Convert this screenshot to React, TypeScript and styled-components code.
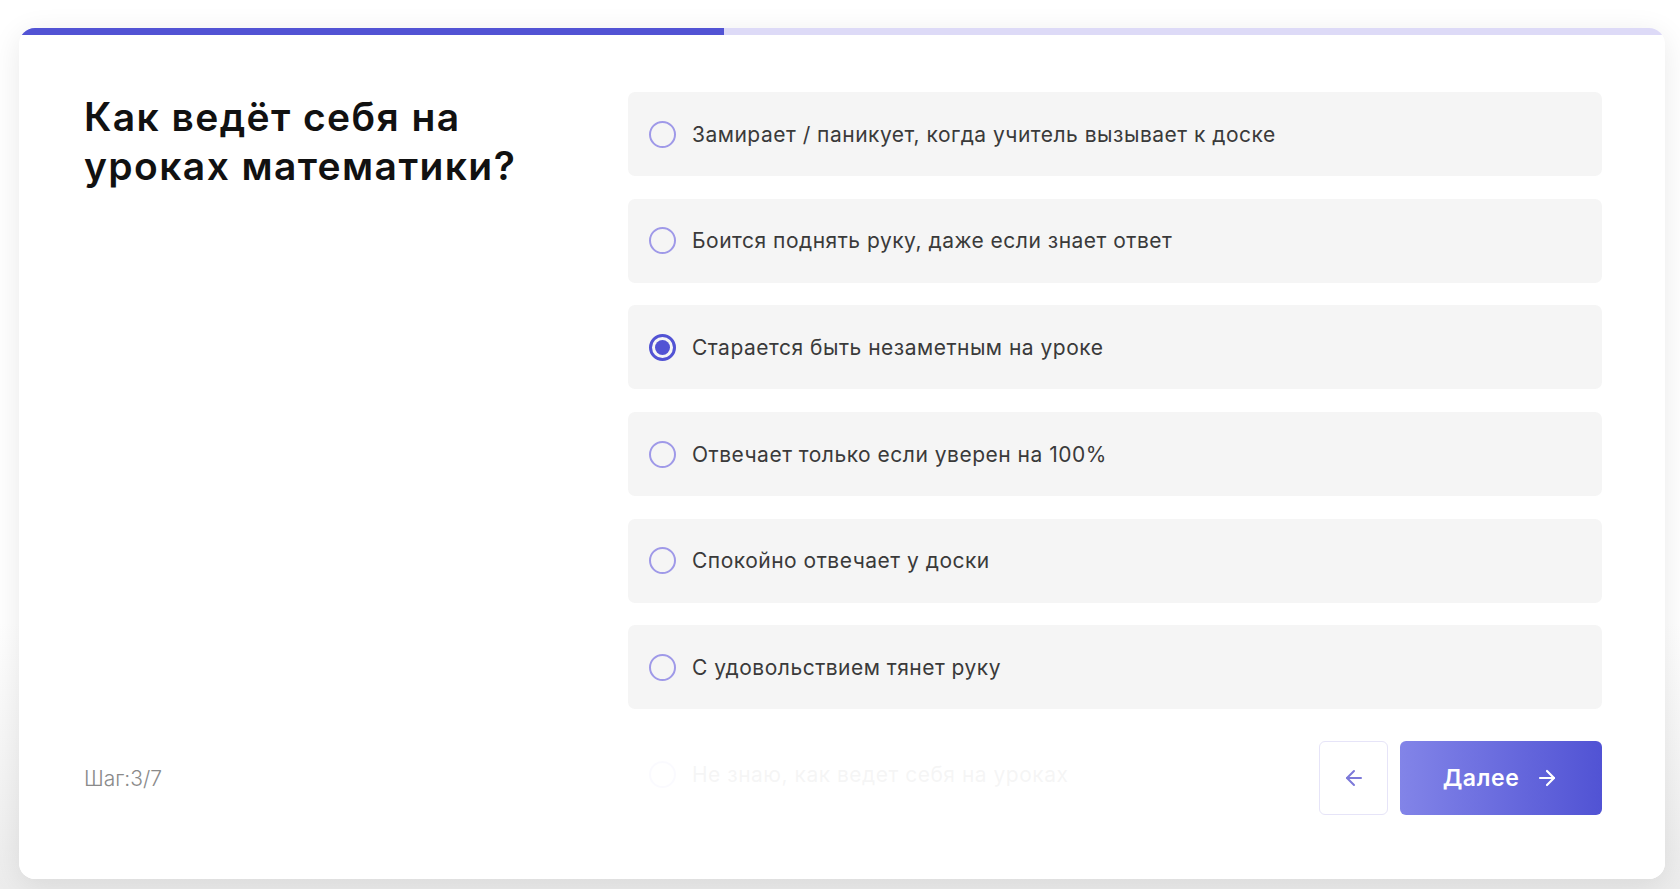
import React, { useState } from 'react';
import styled, { createGlobalStyle, css } from 'styled-components';
import { ArrowLeft, ArrowRight } from 'lucide-react';

const GlobalStyle = createGlobalStyle`
  html, body {
    margin: 0;
    padding: 0;
    height: 100%;
  }
  body {
    background: #ffffff;
    font-family: Inter, "Noto Sans", "Liberation Sans", sans-serif;
    color: #333;
  }
  #root {
    height: 100%;
  }
`;

const Page = styled.div`
  height: 889px;
  box-sizing: border-box;
  padding: 28px 15px 10px 19px;
  background: linear-gradient(180deg, #ffffff 0%, #ffffff 70%, #ececec 100%);
`;

const Card = styled.div`
  position: relative;
  height: 851px;
  background: #fff;
  border-radius: 16px;
  overflow: hidden;
  box-shadow: 0 6px 30px rgba(0, 0, 0, 0.09);
`;

const Track = styled.div`
  height: 7px;
  background: #dddaf7;
`;

const Fill = styled.div`
  height: 100%;
  background: #5253d4;
`;

const Body = styled.div`
  display: grid;
  grid-template-columns: 1fr 974px;
  padding: 57px 63px 0 65px;
`;

const Title = styled.h1`
  margin: 0;
  max-width: 480px;
  font-size: 39px;
  line-height: 49px;
  font-weight: 600;
  color: #111;
  letter-spacing: 1.4px;
`;

const Options = styled.div`
  display: flex;
  flex-direction: column;
  gap: 22.7px;
`;

const Option = styled.label`
  display: flex;
  align-items: center;
  gap: 16px;
  height: 84px;
  padding: 0 21px;
  box-sizing: border-box;
  background: #f5f5f5;
  border-radius: 7px;
  cursor: pointer;
  font-size: 21px;
  color: #3a3a3a;
  letter-spacing: 0.5px;
`;

const Radio = styled.span<{ $checked: boolean }>`
  flex: none;
  width: 27px;
  height: 27px;
  box-sizing: border-box;
  border-radius: 50%;
  border: 2.5px solid #9f99e8;
  display: flex;
  align-items: center;
  justify-content: center;
  ${(p) =>
    p.$checked &&
    css`
      border: 3px solid #5253d4;
      &::after {
        content: '';
        width: 15px;
        height: 15px;
        border-radius: 50%;
        background: #5253d4;
      }
    `}
`;

const Footer = styled.div`
  position: absolute;
  left: 0;
  right: 0;
  bottom: 0;
  height: 151px;
  box-sizing: border-box;
  padding: 13px 63px 0 65px;
  display: flex;
  align-items: flex-start;
  justify-content: space-between;
  background: rgba(255, 255, 255, 0.95);
`;

const Step = styled.div`
  height: 74px;
  display: flex;
  align-items: center;
  font-size: 21px;
  font-weight: 300;
  color: #8a8a8a;
`;

const Buttons = styled.div`
  display: flex;
  gap: 12px;
`;

const BackButton = styled.button`
  width: 69px;
  height: 74px;
  display: flex;
  align-items: center;
  justify-content: center;
  background: #fff;
  border: 1px solid #e6e4f8;
  border-radius: 6px;
  color: #7c79d9;
  cursor: pointer;
`;

const NextButton = styled.button`
  width: 202px;
  height: 74px;
  display: flex;
  align-items: center;
  justify-content: center;
  gap: 16px;
  border: none;
  border-radius: 6px;
  background: linear-gradient(90deg, #8284e8 0%, #5153d4 100%);
  color: #fff;
  font-family: Inter, "Noto Sans", sans-serif;
  font-size: 23px;
  font-weight: 600;
  letter-spacing: 0.6px;
  cursor: pointer;
`;

const answers = [
  'Замирает / паникует, когда учитель вызывает к доске',
  'Боится поднять руку, даже если знает ответ',
  'Старается быть незаметным на уроке',
  'Отвечает только если уверен на 100%',
  'Спокойно отвечает у доски',
  'С удовольствием тянет руку',
  'Не знаю, как ведет себя на уроках',
];

export default function App() {
  const [selected, setSelected] = useState(2);
  const step = 3;
  const total = 7;

  return (
    <>
      <GlobalStyle />
      <Page>
        <Card>
          <Track>
            <Fill style={{ width: `${(step / total) * 100}%` }} />
          </Track>
          <Body>
            <Title>Как ведёт себя на уроках математики?</Title>
            <Options>
              {answers.map((a, i) => (
                <Option key={i} onClick={() => setSelected(i)}>
                  <Radio $checked={selected === i} />
                  {a}
                </Option>
              ))}
            </Options>
          </Body>
          <Footer>
            <Step>
              Шаг:{step}/{total}
            </Step>
            <Buttons>
              <BackButton aria-label="Назад">
                <ArrowLeft size={24} strokeWidth={2} />
              </BackButton>
              <NextButton>
                Далее
                <ArrowRight size={24} strokeWidth={2.2} />
              </NextButton>
            </Buttons>
          </Footer>
        </Card>
      </Page>
    </>
  );
}
